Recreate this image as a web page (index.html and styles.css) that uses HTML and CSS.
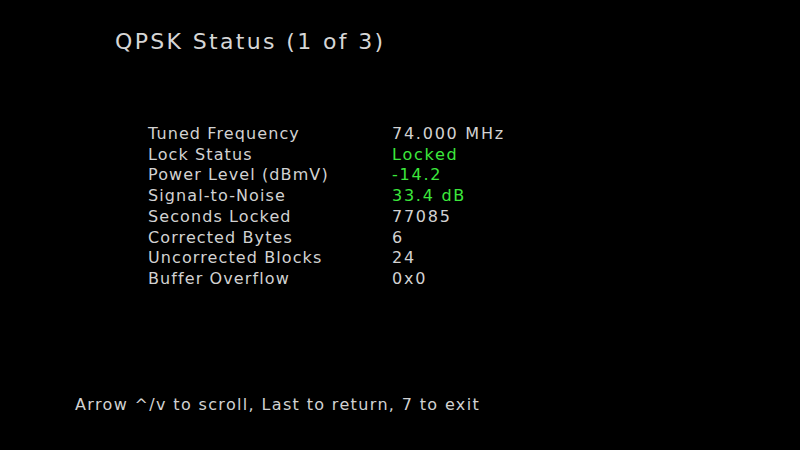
FILE: index.html
```html
<!DOCTYPE html>
<html>
<head>
<meta charset="utf-8">
<link rel="stylesheet" href="styles.css">
</head>
<body>
<div class="screen">
  <h1 class="title">QPSK Status (1 of 3)</h1>
  <div class="table">
    <div class="label">Tuned Frequency</div><div class="value">74.000 MHz</div>
    <div class="label">Lock Status</div><div class="value ok">Locked</div>
    <div class="label">Power Level (dBmV)</div><div class="value ok">-14.2</div>
    <div class="label">Signal-to-Noise</div><div class="value ok">33.4 dB</div>
    <div class="label">Seconds Locked</div><div class="value">77085</div>
    <div class="label">Corrected Bytes</div><div class="value">6</div>
    <div class="label">Uncorrected Blocks</div><div class="value">24</div>
    <div class="label">Buffer Overflow</div><div class="value">0x0</div>
  </div>
  <div class="footer">Arrow ^/v to scroll, Last to return, 7 to exit</div>
</div>
</body>
</html>
```
FILE: styles.css
```css
html, body {
  margin: 0;
  padding: 0;
  background: #000;
}
.screen {
  width: 800px;
  height: 450px;
  background: #000;
  color: #d2d2d2;
  font-family: "DejaVu Sans", sans-serif;
  display: flex;
  flex-direction: column;
  box-sizing: border-box;
}
.title {
  margin: 28px 0 0 115px;
  font-size: 22px;
  font-weight: normal;
  line-height: 28px;
  letter-spacing: 2.35px;
  color: #d6d6d6;
}
.table {
  margin: 68px 0 0 148px;
  display: grid;
  grid-template-columns: 244px auto;
  font-size: 16px;
  line-height: 20.7px;
}
.label {
  letter-spacing: 1.1px;
}
.value {
  letter-spacing: 1.75px;
}
.value.ok {
  color: #3ce83c;
}
.footer {
  margin: auto 0 35px 75px;
  font-size: 16px;
  line-height: 20px;
  letter-spacing: 1.35px;
}
```
